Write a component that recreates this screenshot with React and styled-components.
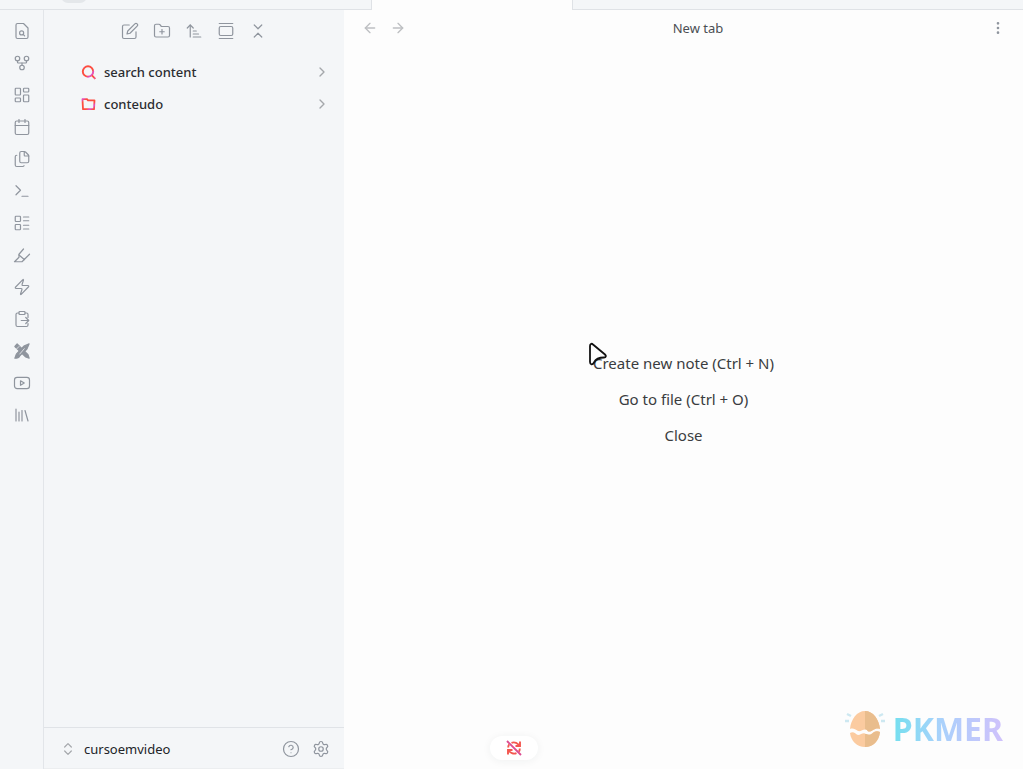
import React from 'react';
import styled, { createGlobalStyle } from 'styled-components';
import {
  ArrowLeft, ArrowRight, ArrowUpNarrowWide, Calendar, ChevronRight, ChevronsUpDown,
  CircleHelp, EllipsisVertical, Files, FolderPlus, GalleryVertical, GitFork,
  LayoutDashboard, LayoutList, Library, Settings, Terminal, Zap,
} from 'lucide-react';

const GlobalStyle = createGlobalStyle`
  * { box-sizing: border-box; }
  body {
    margin: 0;
    background: #fdfdfd;
    color: #2b2d31;
    font-family: "Noto Sans", "Open Sans", sans-serif;
    font-size: 13px;
  }
`;

const Window = styled.div`
  display: flex;
  flex-direction: column;
  height: 100vh;
  overflow: hidden;
`;

const TabBar = styled.header`
  display: flex;
  flex: none;
  height: 10px;
  overflow: hidden;
  background: #f4f6f8;
`;

const TabBarSide = styled.div`
  width: ${(p) => p.$width || 'auto'};
  flex: ${(p) => (p.$width ? 'none' : '1')};
  border-bottom: 1px solid #dfe2e6;
`;

const TabBlob = styled.div`
  width: 26px;
  height: 14px;
  margin: -11px 0 0 61px;
  border-radius: 7px;
  background: #e4e7ea;
`;

const ActiveTab = styled.div`
  flex: none;
  width: 202px;
  background: #fdfdfd;
  border: 1px solid #dfe2e6;
  border-width: 0 1px;
`;

const Workspace = styled.div`
  display: flex;
  flex: 1;
  min-height: 0;
`;

const Ribbon = styled.nav`
  display: flex;
  flex: none;
  flex-direction: column;
  align-items: center;
  width: 44px;
  padding-top: 5px;
  background: #f4f6f8;
  border-right: 1px solid #e2e5e9;
`;

const IconButton = styled.button`
  display: flex;
  align-items: center;
  justify-content: center;
  width: ${(p) => p.$width || 32}px;
  height: 32px;
  padding: 0;
  border: 0;
  background: none;
  color: ${(p) => (p.$faint ? '#bdbfc2' : '#8f959e')};
`;

const Sidebar = styled.aside`
  display: flex;
  flex: none;
  flex-direction: column;
  width: 300px;
  background: #f4f6f8;
  border-bottom: 1px solid #eceef0;
`;

const Toolbar = styled.div`
  display: flex;
  justify-content: center;
  padding: 5px 0 9px;
`;

const FileTree = styled.div`
  display: flex;
  flex: 1;
  flex-direction: column;
`;

const TreeRow = styled.button`
  display: flex;
  align-items: center;
  gap: 8px;
  height: 32px;
  padding: 0 14px 0 37px;
  border: 0;
  background: none;
  color: #2b2d31;
  font-family: inherit;
  font-size: 13px;
  font-weight: 500;
  line-height: 20px;
  text-align: left;
`;

const TreeLabel = styled.span`
  flex: 1;
`;

const VaultBar = styled.footer`
  display: flex;
  align-items: center;
  height: 41px;
  padding: 2px 8px 0 16px;
  border-top: 1px solid #e0e3e7;
`;

const VaultSwitcher = styled.button`
  display: flex;
  flex: 1;
  align-items: center;
  gap: 8px;
  padding: 0;
  border: 0;
  background: none;
  color: #222428;
  font-family: inherit;
  font-size: 13px;
  font-weight: 400;
`;

const Main = styled.main`
  position: relative;
  display: flex;
  flex: 1;
  flex-direction: column;
  min-width: 0;
  background: #fdfdfd;
`;

const ViewHeader = styled.div`
  display: grid;
  grid-template-columns: 80px 1fr 54px;
  align-items: center;
  height: 36px;
  padding: 0 9px 0 12px;
`;

const HeaderGroup = styled.div`
  display: flex;
  justify-content: ${(p) => p.$align || 'flex-start'};
`;

const ViewTitle = styled.h1`
  margin: 0;
  color: #4b4e53;
  font-size: 13px;
  font-weight: 400;
  line-height: 20px;
  text-align: center;
`;

const EmptyState = styled.div`
  display: flex;
  flex: 1;
  flex-direction: column;
  align-items: center;
  justify-content: center;
  gap: 12px;
  padding-bottom: 18px;
`;

const EmptyAction = styled.button`
  position: relative;
  padding: 0;
  border: 0;
  background: none;
  color: #3a3c40;
  font-family: "Noto Sans", "Open Sans", sans-serif;
  font-size: 15px;
  line-height: 24px;
`;

const Pointer = styled.svg`
  position: absolute;
  left: -5px;
  top: -9px;
`;

const SyncPill = styled.button`
  position: absolute;
  left: 146px;
  bottom: 9px;
  display: flex;
  align-items: center;
  justify-content: center;
  width: 48px;
  height: 24px;
  padding: 0;
  border: 0;
  border-radius: 12px;
  background: #ffffff;
  box-shadow: 0 1px 8px rgba(30, 50, 50, 0.06);
`;

const Brand = styled.div`
  position: absolute;
  right: 20px;
  bottom: 20px;
  display: flex;
  align-items: center;
  gap: 8px;
`;

const BrandName = styled.span`
  background: linear-gradient(90deg, #74dfef 0%, #a8d2fb 42%, #b6cbfc 62%, #d0c2fb 100%);
  background-clip: text;
  color: transparent;
  font-family: "Noto Sans", sans-serif;
  font-size: 32px;
  font-weight: 700;
  line-height: 40px;
`;

function Glyph({ children, size = 18 }) {
  return (
    <svg width={size} height={size} viewBox="0 0 24 24" fill="none" stroke="currentColor"
      strokeWidth="1.6" strokeLinecap="round" strokeLinejoin="round" aria-hidden="true">
      {children}
    </svg>
  );
}

const FileFind = () => (
  <Glyph>
    <path d="M14 2H6a2 2 0 0 0-2 2v16a2 2 0 0 0 2 2h12a2 2 0 0 0 2-2V8Z" />
    <circle cx="11.5" cy="14.5" r="2.7" />
    <path d="m13.5 16.5 2 2" />
  </Glyph>
);

const Edit = () => (
  <Glyph>
    <path d="M11 4H4a2 2 0 0 0-2 2v14a2 2 0 0 0 2 2h14a2 2 0 0 0 2-2v-7" />
    <path d="M18.5 2.5a2.1 2.1 0 0 1 3 3L12 15l-4 1 1-4Z" />
  </Glyph>
);

const Marker = () => (
  <Glyph>
    <path d="m14 4-6 7v4l-6 6h10l3-3" />
    <path d="m8 12 7 6 7-7" />
  </Glyph>
);

const ClipboardOut = () => (
  <Glyph>
    <rect x="8" y="2" width="8" height="4" rx="1" />
    <path d="M16 4h2a2 2 0 0 1 2 2v4M8 4H6a2 2 0 0 0-2 2v14a2 2 0 0 0 2 2h12a2 2 0 0 0 2-2v-2" />
    <path d="M11 14h10m-4-4 4 4-4 4" />
  </Glyph>
);

const PenTools = () => (
  <Glyph>
    <path d="m2.5 6 3-3.5L20 17l1.5 4.5L17 20Z" fill="currentColor" />
    <path d="m21.5 2.5-3 7-3 3-4-4 3-3Z" fill="currentColor" />
    <path d="m8.5 12 3.5 3.5-3 3c-1 2-3 3-6.500 3 1-2 1-4 2.500-6Z" fill="currentColor" />
    <path d="m5 9 3-3m1 10 6-7" stroke="#f4f6f8" strokeWidth="1" />
  </Glyph>
);

const Player = () => (
  <Glyph>
    <rect x="2" y="4.5" width="20" height="15" rx="3.5" />
    <path d="m10 9 5 3-5 3Z" />
  </Glyph>
);

const CollapseAll = () => (
  <Glyph>
    <path d="m7 20 5-5 5 5M7 4l5 5 5-5" />
  </Glyph>
);

const AccentGradient = ({ id }) => (
  <linearGradient id={id} x1="0" y1="0" x2="0.4" y2="0.4" spreadMethod="reflect">
    <stop offset="0" stopColor="#e04fd0" />
    <stop offset="0.4" stopColor="#ff5038" />
    <stop offset="1" stopColor="#fb4b45" />
  </linearGradient>
);

const SearchMark = () => (
  <svg width="15" height="16" viewBox="0 0 15 16" fill="none" stroke="url(#searchInk)" strokeWidth="1.9" aria-hidden="true">
    <defs><AccentGradient id="searchInk" /></defs>
    <circle cx="7" cy="7.500" r="5.2" />
    <path d="m10.700 11.200 3.600 3.600" />
  </svg>
);

const FolderMark = () => (
  <svg width="15" height="16" viewBox="0 0 15 16" fill="none" stroke="url(#folderInk)" strokeWidth="1.8" strokeLinejoin="round" aria-hidden="true">
    <defs><AccentGradient id="folderInk" /></defs>
    <path d="M1.500 4V3.200h4.500l1 1.200h6.500l-.5 8.800H2Z" />
  </svg>
);

const SyncOff = () => (
  <svg width="16" height="16" viewBox="0 0 16 16" fill="none" stroke="#f4574f" strokeWidth="1.9" aria-hidden="true">
    <path d="M5.500 2.800A6 6 0 0 1 13.300 6M14 1.500V6H9.500" />
    <path d="M10.500 13.200A6 6 0 0 1 2.700 10M2 14.500V10h4.500M2.200 7.500c0-1.400.4-2.400 1-3.100M13.800 8.500c0 1.400-.4 2.400-1 3.100" />
    <path d="m1 1 14 14" stroke="#dc4c92" />
  </svg>
);

const Egg = () => (
  <svg width="40" height="38" viewBox="0 0 40 38" aria-hidden="true">
    <path d="M5 19C6 9 12 1 20 1s14 8 15 18c-3-1-5 0-7 1-3 2-5 2-6 0-3-2-6 2-9 1-3-2-5-3-8-2Z" fill="#fbcba0" />
    <path d="M5 23c4-2 5 1 8 2 3 0 5-3 8-1 3 3 5 0 8-2 2-1 4-1 6 0-1 9-7 15-15 15S6 31 5 23Z" fill="#fbcba0" />
    <path d="M20 1c8 0 14 8 15 18-3-1-5 0-7 1-3 2-5 2-6 0l-2-1ZM20 24c4 0 5 2 9-2 2-1 4-1 6 0-1 9-7 15-15 15Z" fill="#e9bd8d" />
    <path d="m2 4 4 2M0 11h4M38 4l-4 2M40 11h-4" stroke="#cde8f1" strokeWidth="2.400" />
  </svg>
);

const line = { size: 18, strokeWidth: 1.6 };

const ribbonItems = [
  ['Quick switcher', <FileFind />],
  ['Graph view', <GitFork {...line} />],
  ['Canvas', <LayoutDashboard {...line} />],
  ['Daily note', <Calendar {...line} />],
  ['Templates', <Files {...line} />],
  ['Command palette', <Terminal {...line} />],
  ['Lists', <LayoutList {...line} />],
  ['Highlighter', <Marker />],
  ['Quick actions', <Zap {...line} />],
  ['Paste', <ClipboardOut />],
  ['Drawing tools', <PenTools />],
  ['Video', <Player />],
  ['Library', <Library {...line} />],
];

const toolbarItems = [
  ['New note', <Edit />],
  ['New folder', <FolderPlus {...line} />],
  ['Sort order', <ArrowUpNarrowWide {...line} />],
  ['Reveal', <GalleryVertical {...line} />],
  ['Collapse all', <CollapseAll />],
];

export default function App() {
  return (
    <>
      <GlobalStyle />
      <Window>
        <TabBar>
          <TabBarSide $width="371px"><TabBlob /></TabBarSide>
          <ActiveTab />
          <TabBarSide />
        </TabBar>
        <Workspace>
          <Ribbon>
            {ribbonItems.map(([label, icon]) => (
              <IconButton key={label} aria-label={label}>{icon}</IconButton>
            ))}
          </Ribbon>
          <Sidebar>
            <Toolbar>
              {toolbarItems.map(([label, icon]) => (
                <IconButton key={label} aria-label={label}>{icon}</IconButton>
              ))}
            </Toolbar>
            <FileTree>
              <TreeRow>
                <SearchMark />
                <TreeLabel>search content</TreeLabel>
                <ChevronRight size={16} color="#a4a7ab" />
              </TreeRow>
              <TreeRow>
                <FolderMark />
                <TreeLabel>conteudo</TreeLabel>
                <ChevronRight size={16} color="#a4a7ab" />
              </TreeRow>
            </FileTree>
            <VaultBar>
              <VaultSwitcher>
                <ChevronsUpDown size={16} color="#a4a7ab" strokeWidth={1.8} />
                cursoemvideo
              </VaultSwitcher>
              <IconButton $width={30} aria-label="Help"><CircleHelp {...line} /></IconButton>
              <IconButton $width={30} aria-label="Settings"><Settings {...line} /></IconButton>
            </VaultBar>
          </Sidebar>
          <Main>
            <ViewHeader>
              <HeaderGroup>
                <IconButton $faint $width={28} aria-label="Back"><ArrowLeft size={16} /></IconButton>
                <IconButton $faint $width={28} aria-label="Forward"><ArrowRight size={16} /></IconButton>
              </HeaderGroup>
              <ViewTitle>New tab</ViewTitle>
              <HeaderGroup $align="flex-end">
                <IconButton aria-label="More options"><EllipsisVertical size={16} /></IconButton>
              </HeaderGroup>
            </ViewHeader>
            <EmptyState>
              <EmptyAction>
                Create new note (Ctrl + N)
                <Pointer width="20" height="26" viewBox="0 0 20 26" aria-hidden="true">
                  <path d="M2 4c0-2 1.500-3 3-1.500l12 10c1.500 1.500 1 3-1 3-5 0-8 1-10 5-1.500 3-4 2-4-.5Z"
                    fill="#fdfdfd" stroke="#111" strokeWidth="1.8" strokeLinejoin="round" />
                </Pointer>
              </EmptyAction>
              <EmptyAction>Go to file (Ctrl + O)</EmptyAction>
              <EmptyAction>Close</EmptyAction>
            </EmptyState>
            <SyncPill aria-label="Sync status"><SyncOff /></SyncPill>
            <Brand>
              <Egg />
              <BrandName>PKMER</BrandName>
            </Brand>
          </Main>
        </Workspace>
      </Window>
    </>
  );
}
